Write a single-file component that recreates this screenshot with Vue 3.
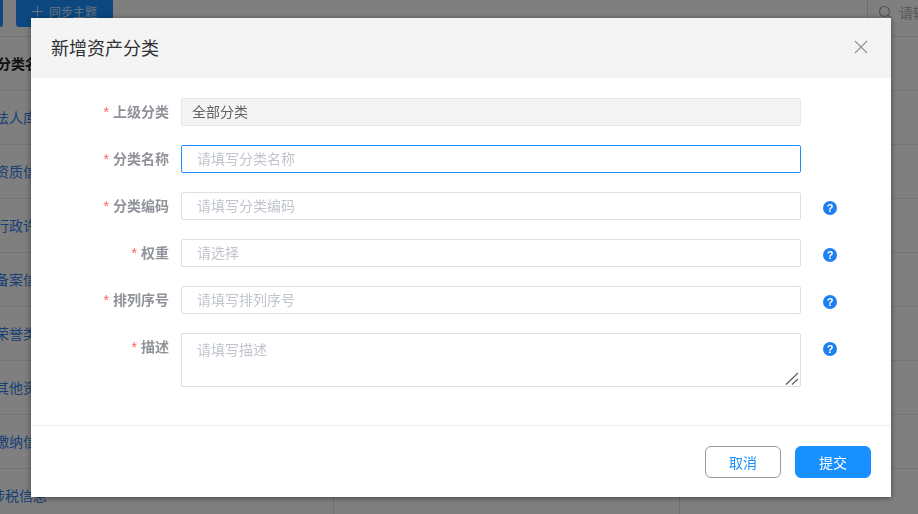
<script setup>
const rows = ['法人库', '资质信', '行政许', '备案信', '荣誉类', '其他资', '缴纳信', '涉税信息']
const fields = [
  { label: '上级分类', value: '全部分类', disabled: true },
  { label: '分类名称', placeholder: '请填写分类名称', focus: true },
  { label: '分类编码', placeholder: '请填写分类编码', help: true },
  { label: '权重', placeholder: '请选择', help: true },
  { label: '排列序号', placeholder: '请填写排列序号', help: true },
  { label: '描述', placeholder: '请填写描述', help: true, area: true }
]
</script>

<template>
  <div class="page">
    <div class="toolbar">
      <button class="tool first"></button>
      <button class="tool sync">
        <svg class="plus" width="11" height="11" viewBox="0 0 11 11" stroke="#cfe6ff" stroke-width="1"><path d="M5.5 0v11M0 5.5h11"/></svg>
        同步主题
      </button>
      <div class="search">
        <svg width="14" height="14" viewBox="0 0 14 14" fill="none" stroke="#aaaaae" stroke-width="1.2"><circle cx="6.5" cy="6.5" r="5"/><path d="M10.2 10.2l2.6 2.6"/></svg>
        <span>请输入</span>
      </div>
    </div>
    <div class="table">
      <div class="row head"><span class="c1">分类名称</span><span class="c2"></span><span class="c3"></span></div>
      <div v-for="r in rows" :key="r" class="row"><span class="c1 link">{{ r }}</span><span class="c2"></span><span class="c3"></span></div>
    </div>
  </div>

  <div class="mask"></div>

  <div class="dialog">
    <div class="d-head">
      <span class="title">新增资产分类</span>
      <svg class="close" width="14" height="14" viewBox="0 0 14 14" fill="none" stroke="#909399" stroke-width="1.2"><path d="M1 1l12 12M13 1L1 13"/></svg>
    </div>
    <div class="d-body">
      <div v-for="f in fields" :key="f.label" class="field">
        <label class="label"><i class="star">*</i>{{ f.label }}</label>
        <div v-if="f.area" class="area-wrap">
          <textarea class="ctl area" :placeholder="f.placeholder"></textarea>
          <svg class="grip" width="14" height="13" viewBox="0 0 14 13" fill="none" stroke="#555" stroke-width="1.1"><path d="M1 12.5L13 1M7 12.5l6-5.5"/></svg>
        </div>
        <input v-else class="ctl" :class="{ dis: f.disabled, foc: f.focus }" :placeholder="f.placeholder" :value="f.value" :disabled="f.disabled" />
        <span v-if="f.help" class="help">?</span>
      </div>
    </div>
    <div class="d-foot">
      <button class="btn ghost">取消</button>
      <button class="btn primary">提交</button>
    </div>
  </div>
</template>

<style scoped>
.page {
  width: 918px;
  height: 514px;
  overflow: hidden;
  background: #fff;
  font-family: "Liberation Sans", "Noto Sans CJK SC", sans-serif;
  font-size: 14px;
}
.toolbar {
  display: flex;
  height: 36px;
  border-bottom: 1px solid #e8e8e8;
  box-sizing: content-box;
  margin-left: -40px;
  width: 958px;
}
.tool {
  height: 27px;
  border: 0;
  border-radius: 0 0 3px 3px;
  background: #1890ff;
  color: #fff;
  font: inherit;
  padding: 0;
}
.first { width: 43px; }
.sync {
  width: 97px;
  margin-left: 13px;
  color: #cfe6ff;
  font-size: 12px;
  display: flex;
  align-items: center;
  justify-content: center;
  padding-bottom: 5px;
  box-sizing: border-box;
}
.plus { margin-right: 6px; flex: none; }
.search {
  margin-left: auto;
  width: 51px;
  height: 27px;
  box-sizing: border-box;
  border-left: 1px solid #ddd;
  display: flex;
  align-items: center;
  gap: 7px;
  padding: 0 0 4px 10px;
  color: #b0b0b0;
  overflow: hidden;
  white-space: nowrap;
}
.search svg { flex: none; }
.table { margin-left: -5px; width: 923px; }
.row {
  display: grid;
  grid-template-columns: 338px 346px 239px;
  height: 53px;
  border-bottom: 1px solid #e8e8e8;
  align-items: center;
}
.row > span { height: 100%; display: flex; align-items: center; }
.c1 { box-sizing: border-box; padding-bottom: 2px; }
.c2, .c3 { border-left: 1px solid #e0e0e0; }
.head { font-weight: 700; color: #222; }
.head .c1 { padding-left: 2px; }
.row:last-child .c1 { margin-left: -4px; }
.link { color: #2f80ed; white-space: nowrap; }

.mask {
  position: fixed;
  inset: 0;
  background: rgba(0, 0, 0, 0.5);
}
.dialog {
  position: fixed;
  left: 31px;
  top: 18px;
  width: 860px;
  height: 479px;
  background: #fff;
  box-shadow: 0 1px 6px rgba(0, 0, 0, 0.45);
  display: flex;
  flex-direction: column;
  font-family: "Liberation Sans", "Noto Sans CJK SC", sans-serif;
  font-size: 14px;
}
.d-head {
  height: 60px;
  flex: none;
  box-sizing: border-box;
  background: #f4f4f5;
  display: flex;
  align-items: center;
  justify-content: space-between;
  padding: 0 23px 3px 20px;
}
.title { font-size: 18px; color: #303133; }
.d-body {
  flex: 1;
  padding-top: 20px;
}
.field {
  display: flex;
  align-items: flex-start;
  margin-bottom: 19px;
}
.label {
  width: 138px;
  flex: none;
  height: 28px;
  line-height: 28px;
  text-align: right;
  font-weight: 700;
  color: #909399;
  margin-right: 12px;
}
.star {
  font-style: normal;
  font-weight: 400;
  color: #ff5c5c;
  margin-right: 4px;
}
.ctl {
  width: 620px;
  height: 28px;
  flex: none;
  box-sizing: border-box;
  border: 1px solid #dcdfe6;
  border-radius: 2px;
  padding: 0 15px;
  font: inherit;
  color: #606266;
  background: #fff;
  outline: none;
  display: block;
  margin: 0;
}
.ctl::placeholder { color: #c0c4cc; opacity: 1; }
.dis {
  background: #f4f4f5;
  border-color: #e4e7ed;
  padding: 0 10px 2px;
  color: #606266;
  -webkit-text-fill-color: #606266;
  opacity: 1;
}
.foc { border-color: #1890ff; }
.area-wrap {
  position: relative;
  width: 620px;
  height: 54px;
  flex: none;
}
.area {
  height: 54px;
  padding: 5px 15px;
  line-height: 22px;
  resize: none;
}
.grip {
  position: absolute;
  right: 2px;
  bottom: 2px;
}
.help {
  width: 14px;
  height: 14px;
  flex: none;
  margin: 9px 0 0 22px;
  border-radius: 50%;
  background: #1e80f0;
  color: #fff;
  font-size: 11px;
  font-weight: 700;
  line-height: 14px;
  text-align: center;
}
.d-foot {
  height: 72px;
  flex: none;
  box-sizing: border-box;
  border-top: 1px solid #ebeef5;
  padding: 20px 20px 0;
  display: flex;
  justify-content: flex-end;
  gap: 14px;
}
.btn {
  width: 76px;
  height: 32px;
  border-radius: 6px;
  font: inherit;
  padding: 0;
}
.ghost { background: #fff; border: 1px solid #999; color: #1890ff; }
.primary { background: #1890ff; border: 1px solid #1890ff; color: #fff; }
</style>

<style>
html, body { margin: 0; overflow: hidden; }
</style>
